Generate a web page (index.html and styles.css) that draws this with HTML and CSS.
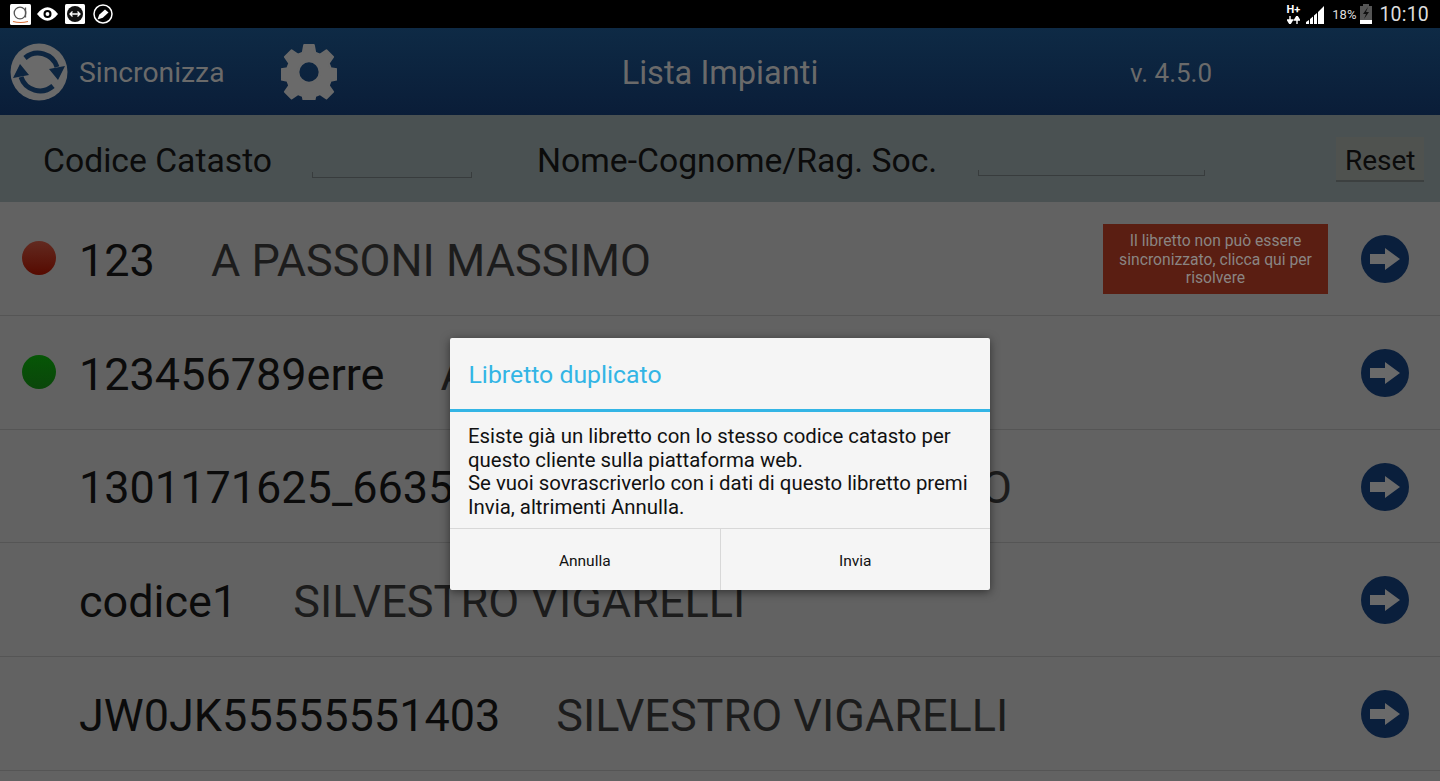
FILE: index.html
```html
<!DOCTYPE html>
<html lang="en">
<head>
    <meta charset="UTF-8">
    <title>Lista Impianti</title>
    <link rel="stylesheet" href="styles.css">
</head>
<body>
    <div class="status-bar">
        <div class="status-left">
            <svg width="21" height="21" viewBox="0 0 21 21"><rect width="21" height="21" rx="1.500" fill="#fff"/><circle cx="10" cy="9" r="5.800" fill="none" stroke="#555" stroke-width="1.300"/><path d="M15.500 3.500v10" stroke="#555" stroke-width="1.300"/><path d="M3 17.500q7.500 2 15 0" stroke="#d8703a" stroke-width="1.200" fill="none"/></svg>
            <svg class="eye" width="21" height="14" viewBox="0 0 22 14"><path d="M0 7q11-14 22 0q-11 14-22 0z" fill="#fff"/><circle cx="11" cy="7" r="4.200" fill="#000"/><circle cx="11" cy="7" r="2" fill="#fff"/></svg>
            <svg class="remote" width="20" height="20" viewBox="0 0 20 20"><rect width="20" height="20" rx="1.500" fill="#fff"/><circle cx="10" cy="10" r="8" fill="#111"/><path d="M5 10h10M7.500 7.500L5 10l2.500 2.500M12.500 7.500L15 10l-2.500 2.500" stroke="#fff" stroke-width="1.300" fill="none"/></svg>
            <svg class="pencil" width="20" height="20" viewBox="0 0 20 20"><circle cx="10" cy="10" r="9" fill="none" stroke="#fff" stroke-width="1.500"/><path d="M4.500 15.500l1.700-4.700 5.800-5.300 3.500 3-5.700 5.300z" fill="#fff"/></svg>
        </div>
        <div class="status-right">
            <div class="net">
                <span>H+</span>
                <svg width="13" height="8" viewBox="0 0 13 8"><path d="M3 0v4M0.500 4h5L3 8zM10 8v-4M7.500 4h5L10 0z" stroke="#fff" stroke-width="1.400" fill="#fff"/></svg>
            </div>
            <svg class="signal" width="19" height="19" viewBox="0 0 19 19"><path d="M0 19v-2l3-2v4zM4 19v-5l3-2.500v7.500zM8 19v-8.500l3-2.500v11zM12 19v-12l6-6v18z" fill="#fff"/></svg>
            <span class="battery-pct">18%</span>
            <svg class="battery" width="12" height="20" viewBox="0 0 12 20"><rect x="3" y="0" width="6" height="2" fill="#555"/><rect y="2" width="12" height="14" fill="#555"/><rect y="16" width="12" height="4" fill="#fff"/><path d="M8 3l-5 7h3l-2 5 5-7h-3z" fill="#111"/></svg>
            <span class="clock">10:10</span>
        </div>
    </div>

    <div class="top-bar">
        <div class="sync">
            <svg width="58" height="58" viewBox="0 0 58 58"><circle cx="29" cy="29" r="28.500" fill="#6a6a6a"/><path d="M15 15A20 20 0 0 1 47 24M43 43A20 20 0 0 1 11 34" fill="none" stroke="#0d2540" stroke-width="5"/><path d="M39 26L55 23 48 37zM19 32L3 35 10 21z" fill="#0d2540"/></svg>
            <span class="sync-label">Sincronizza</span>
        </div>
        <svg class="gear" width="56" height="56" viewBox="-1 -1 58 58"><path fill="#6a6a6a" stroke="#6a6a6a" stroke-width="2" stroke-linejoin="round" fill-rule="evenodd" d="M23 0h10l1.500 8 5 2 6.500-4.500 7 7-4.500 6.500 2 5 8 1.500v10l-8 1.500-2 5 4.500 6.500-7 7-6.500-4.500-5 2-1.500 8h-10l-1.500-8-5-2-6.500 4.500-7-7 4.500-6.500-2-5-8-1.500v-10l8-1.500 2-5-4.500-6.500 7-7 6.500 4.500 5-2zM28 17a11 11 0 1 0 0 22a11 11 0 1 0 0-22z"/></svg>
        <div class="page-title">Lista Impianti</div>
        <div class="version">v. 4.5.0</div>
    </div>

    <div class="filter-bar">
        <label class="filter-label first">Codice Catasto</label>
        <span class="field short"></span>
        <label class="filter-label second">Nome-Cognome/Rag. Soc.</label>
        <span class="field long"></span>
        <button class="reset">Reset</button>
    </div>

    <div class="list">
        <div class="row">
            <span class="dot red"></span>
            <span class="code">123</span>
            <span class="name">A PASSONI MASSIMO</span>
            <div class="warning">Il libretto non può essere sincronizzato, clicca qui per risolvere</div>
            <svg class="go" width="48" height="48" viewBox="0 0 48 48"><circle cx="24" cy="24" r="24" fill="#0a1f3c"/><path d="M9 19h15v-6l15 11-15 11v-6h-15z" fill="#6a6a6a"/></svg>
        </div>
        <div class="row">
            <span class="dot green"></span>
            <span class="code">123456789erre</span>
            <span class="name">A PASSONI MASSIMO</span>
            <svg class="go" width="48" height="48" viewBox="0 0 48 48"><circle cx="24" cy="24" r="24" fill="#0a1f3c"/><path d="M9 19h15v-6l15 11-15 11v-6h-15z" fill="#6a6a6a"/></svg>
        </div>
        <div class="row">
            <span class="dot"></span>
            <span class="code">1301171625_663512</span>
            <span class="name">A. PASSONI MASSIMO</span>
            <svg class="go" width="48" height="48" viewBox="0 0 48 48"><circle cx="24" cy="24" r="24" fill="#0a1f3c"/><path d="M9 19h15v-6l15 11-15 11v-6h-15z" fill="#6a6a6a"/></svg>
        </div>
        <div class="row">
            <span class="dot"></span>
            <span class="code">codice1</span>
            <span class="name">SILVESTRO VIGARELLI</span>
            <svg class="go" width="48" height="48" viewBox="0 0 48 48"><circle cx="24" cy="24" r="24" fill="#0a1f3c"/><path d="M9 19h15v-6l15 11-15 11v-6h-15z" fill="#6a6a6a"/></svg>
        </div>
        <div class="row">
            <span class="dot"></span>
            <span class="code">JW0JK55555551403</span>
            <span class="name">SILVESTRO VIGARELLI</span>
            <svg class="go" width="48" height="48" viewBox="0 0 48 48"><circle cx="24" cy="24" r="24" fill="#0a1f3c"/><path d="M9 19h15v-6l15 11-15 11v-6h-15z" fill="#6a6a6a"/></svg>
        </div>
    </div>

    <div class="dialog">
        <div class="dialog-title">Libretto duplicato</div>
        <div class="dialog-body">Esiste già un libretto con lo stesso codice catasto per questo cliente sulla piattaforma web.<br>Se vuoi sovrascriverlo con i dati di questo libretto premi Invia, altrimenti Annulla.</div>
        <div class="dialog-actions">
            <button class="dialog-btn">Annulla</button>
            <button class="dialog-btn">Invia</button>
        </div>
    </div>
</body>
</html>
```

FILE: styles.css
```css
body {
    margin: 0;
    height: 781px;
    overflow: hidden;
    font-family: Roboto, sans-serif;
    background-color: #626262;
    position: relative;
}
.status-bar {
    height: 28px;
    background-color: #000;
    display: flex;
    align-items: center;
    justify-content: space-between;
    padding: 0 11px 0 10px;
}
.status-left, .status-right {
    display: flex;
    align-items: center;
}
.status-left {
    gap: 6px;
}
.remote {
    margin-left: 1px;
}
.pencil {
    margin-left: 2px;
}
.status-right {
    color: #ddd;
}
.net {
    display: flex;
    flex-direction: column;
    align-items: center;
    gap: 1px;
    font-size: 11px;
    font-weight: bold;
    line-height: 10px;
    color: #fff;
    margin-right: 6px;
}
.net svg {
    display: block;
}
.signal {
    margin-right: 7px;
}
.battery-pct {
    font-size: 13px;
    margin-right: 4px;
}
.clock {
    font-size: 19.500px;
    margin-left: 7px;
    letter-spacing: 0.200px;
}
.top-bar {
    height: 87px;
    box-sizing: border-box;
    background: linear-gradient(#0e2a45, #0a1d38);
    display: flex;
    align-items: center;
    position: relative;
    color: #6a6a6a;
    padding-left: 10px;
}
.sync {
    display: flex;
    align-items: center;
    gap: 11px;
    width: 271px;
}
.sync-label {
    font-size: 28.300px;
    padding-top: 2px;
}
.gear {
    flex: none;
}
.page-title {
    position: absolute;
    left: 0;
    right: 0;
    top: 26px;
    text-align: center;
    font-size: 32.600px;
}
.version {
    position: absolute;
    left: 1130px;
    top: 30px;
    font-size: 26px;
}
.filter-bar {
    height: 87px;
    background-color: #4a5152;
    display: flex;
    align-items: center;
    color: #0b0b0b;
    font-size: 33.700px;
    padding: 2px 0 0 43px;
    box-sizing: border-box;
}
.filter-label {
    padding-top: 2px;
}
.field {
    display: block;
    height: 6px;
    border: 1px solid #383c3d;
    border-top: none;
    align-self: flex-start;
    margin-top: 55px;
    box-sizing: border-box;
}
.field.short {
    width: 160px;
    margin-left: 40px;
}
.field.long {
    width: 227px;
    margin-left: 41px;
    margin-top: 53px;
}
.filter-label.second {
    margin-left: 65px;
}
.reset {
    margin-left: 131px;
    width: 88px;
    height: 45px;
    background-color: #4f524f;
    border: none;
    border-bottom: 2px solid #3c4040;
    color: #0b0b0b;
    font-family: Roboto, sans-serif;
    font-size: 28px;
    padding: 3px 0 0;
}
.row {
    height: 113.800px;
    box-sizing: border-box;
    border-bottom: 1px solid #555;
    display: flex;
    align-items: center;
    position: relative;
    font-size: 45px;
}
.dot {
    width: 34px;
    height: 34px;
    border-radius: 50%;
    margin-left: 22px;
    flex: none;
}
.dot.red {
    background: linear-gradient(#622a20, #560a00);
}
.dot.green {
    background: linear-gradient(#065606, #0a460a);
}
.code {
    margin-left: 23px;
    padding-top: 4px;
    color: #0b0b0b;
    white-space: nowrap;
}
.name {
    margin-left: 56px;
    padding-top: 4px;
    color: #1c1c1c;
    white-space: nowrap;
}
.warning {
    position: absolute;
    left: 1103px;
    top: 22px;
    width: 225px;
    height: 70px;
    box-sizing: border-box;
    background-color: #5a1e12;
    color: #8a8583;
    font-size: 15.700px;
    line-height: 18.500px;
    text-align: center;
    padding: 8px 6px;
}
.go {
    position: absolute;
    left: 1361px;
    top: 33px;
}
.dialog {
    position: absolute;
    left: 450px;
    top: 338px;
    width: 540px;
    height: 252px;
    background-color: #f5f5f5;
    border-radius: 2px;
    box-shadow: 0 2px 10px rgba(0, 0, 0, 0.5);
    display: flex;
    flex-direction: column;
}
.dialog-title {
    height: 71px;
    border-bottom: 3px solid #33b5e5;
    color: #33b5e5;
    font-size: 24.800px;
    line-height: 74px;
    padding-left: 18.500px;
}
.dialog-body {
    height: 116px;
    box-sizing: border-box;
    padding: 13px 18px 0;
    font-size: 20.400px;
    line-height: 23.600px;
    color: #111;
}
.dialog-actions {
    flex: 1;
    display: flex;
    border-top: 1px solid #d8d8d8;
}
.dialog-btn {
    flex: 1;
    background: none;
    border: none;
    font-family: Roboto, sans-serif;
    font-size: 15.500px;
    color: #111;
    padding: 2px 0 0;
}
.dialog-btn + .dialog-btn {
    border-left: 1px solid #d8d8d8;
}
```
